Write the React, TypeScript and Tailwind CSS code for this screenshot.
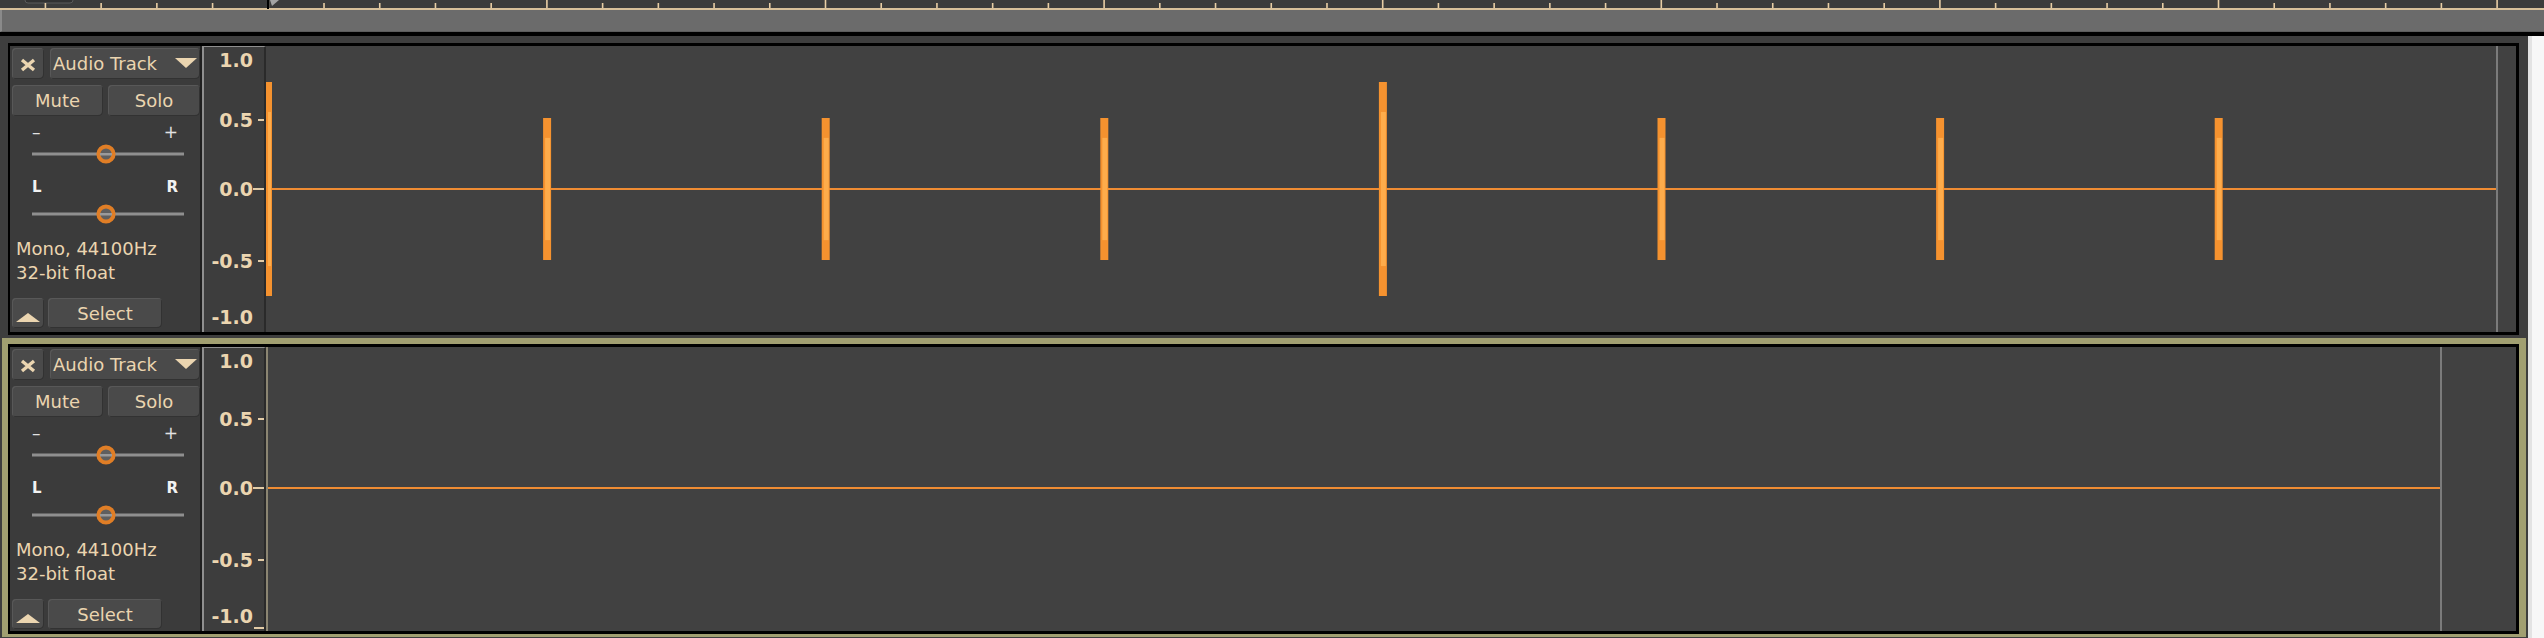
import React from "react";

const CREAM = "#ebd5b0";

// time ruler: one minor tick every 55.72px, a major one every fifth
const TICK_START = 268.5;
const TICK_STEP = 55.72;

type Spike = { x: number; w: number; a: number };

// clip starts at the left edge of the wave area; peaks sit on the major ticks
const trackOneSpikes: Spike[] = [
  { x: 0, w: 6, a: 107 },
  ...[1, 2, 3, 4, 5, 6, 7].map((k) => ({
    x: 281.1 + (k - 1) * 278.6 - 4,
    w: 8,
    a: k === 4 ? 107 : 71,
  })),
];

function TimeRuler() {
  const ticks = [];
  for (let n = -4; n <= 40; n++) {
    const x = TICK_START + n * TICK_STEP;
    const major = n % 5 === 0;
    ticks.push(
      <rect
        key={n}
        x={x - 1}
        y={major ? 0 : 3}
        width={1.6}
        height={major ? 8 : 5}
        fill="#e8cea5"
      />
    );
  }
  return (
    <svg width={2544} height={10} className="block bg-[#3c3c3c]">
      <rect x={25} y={-5} width={48} height={8} rx={3} fill="#323232" stroke="#5a5a5a" />
      {ticks}
      <rect x={0} y={8} width={2544} height={2} fill="#d8c09a" />
      <rect x={267} y={0} width={2} height={9} fill="#000" />
      <polygon points="270,0 279,0 272,6" fill="#a3a3a3" />
    </svg>
  );
}

function Btn({
  className,
  children,
}: {
  className: string;
  children?: React.ReactNode;
}) {
  return (
    <div
      className={`flex items-center rounded-[4px] bg-[#4a4a4a] shadow-[inset_1px_1px_0_#585858,inset_-1px_-1px_0_#323232] ${className}`}
    >
      {children}
    </div>
  );
}

function Slider({ className }: { className: string }) {
  return (
    <svg width={190} height={20} className={`block ${className}`}>
      <rect x={22} y={8.5} width={152} height={3} fill="#8f8f8f" />
      <circle cx={96} cy={10} r={7.6} fill="#5f5f5f" stroke="#e07e26" strokeWidth={4} />
      <rect x={90} y={9} width={12} height={2.5} fill="#9a9a9a" />
    </svg>
  );
}

function ControlPanel() {
  return (
    <div className="w-[192px] shrink-0 border-r-2 border-[#1f1f1f] bg-[#3b3b3b] flex flex-col text-[18px]">
      <div className="flex mt-[2px] h-[31px]">
        <Btn className="ml-[2px] w-[32px] justify-center pt-[2px]">
          <svg width={16} height={14}>
            <path d="M2 2 L14 12 M14 2 L2 12" stroke={CREAM} strokeWidth={3.4} />
          </svg>
        </Btn>
        <Btn className="ml-[6px] w-[150px] justify-between pl-[3px] pr-[3px]">
          <span className="leading-none">Audio Track</span>
          <svg width={22} height={11}>
            <polygon points="0,0 22,0 11,10" fill={CREAM} />
          </svg>
        </Btn>
      </div>
      <div className="flex mt-[6px] h-[31px]">
        <Btn className="ml-[2px] w-[91px] justify-center">Mute</Btn>
        <Btn className="ml-[5px] w-[92px] justify-center">Solo</Btn>
      </div>
      <div className="mt-[8px] h-[18px] flex justify-between items-center px-[22px] text-[17px] text-[#e2e2e2]">
        <span>–</span>
        <span>+</span>
      </div>
      <Slider className="mt-[2px]" />
      <div className="mt-[14px] h-[18px] flex justify-between items-center px-[22px] text-[15px] font-bold text-[#f2f2f2]">
        <span>L</span>
        <span>R</span>
      </div>
      <Slider className="mt-[8px]" />
      <div className="mt-[13px] pl-[6px] leading-[24px]">
        <div>Mono, 44100Hz</div>
        <div>32-bit float</div>
      </div>
      <div className="flex mt-[13px] h-[30px]">
        <Btn className="ml-[2px] w-[32px] justify-center pt-[10px]">
          <svg width={24} height={10}>
            <polygon points="12,0 24,9 0,9" fill={CREAM} />
          </svg>
        </Btn>
        <Btn className="ml-[4px] w-[114px] justify-center">Select</Btn>
      </div>
    </div>
  );
}

function AmpRuler({ h, zero, bottomTick }: { h: number; zero: number; bottomTick: boolean }) {
  const labels = [
    { t: "1.0", c: 14, tick: 0 },
    { t: "0.5", c: zero - 69, tick: 6 },
    { t: "0.0", c: zero, tick: 11 },
    { t: "-0.5", c: zero + 72, tick: 6 },
    { t: "-1.0", c: h - 15, tick: 0 },
  ];
  return (
    <div className="relative w-[64px] shrink-0 border-l-2 border-t border-r-2 border-l-[#8f8f8f] border-t-[#8f8f8f] border-r-[#2a2a2a] bg-[#3d3d3d] font-bold text-[19px]">
      {labels.map((l) => (
        <React.Fragment key={l.t}>
          <div
            className="absolute right-[11px] h-[20px] flex items-center leading-none"
            style={{ top: l.c - 11 }}
          >
            {l.t}
          </div>
          {l.tick > 0 && (
            <div
              className="absolute right-0 h-[2px] bg-[#e2cba6]"
              style={{ top: l.c - 2, width: l.tick }}
            />
          )}
        </React.Fragment>
      ))}
      {bottomTick && (
        <div className="absolute right-0 bottom-[2px] w-[10px] h-[2px] bg-[#e2cba6]" />
      )}
    </div>
  );
}

function Wave({
  h,
  zero,
  spikes,
  clipStart,
  clipEnd,
}: {
  h: number;
  zero: number;
  spikes: Spike[];
  clipStart: boolean;
  clipEnd: number;
}) {
  return (
    <svg width={2250} height={h} className="block bg-[#414141]">
      <rect x={0} y={zero - 1} width={clipEnd} height={2} fill="#ef8c33" />
      {spikes.map((s, i) => (
        <g key={i}>
          <rect x={s.x} y={zero - s.a} width={s.w} height={s.a * 2} fill="#f5922f" />
          <rect
            x={s.x + 2}
            y={zero - s.a * 0.72}
            width={s.w - 3}
            height={s.a * 1.44}
            fill="#feac4b"
          />
        </g>
      ))}
      {clipStart && <rect x={0} y={0} width={2} height={h} fill="#8b8572" />}
      <rect x={clipEnd} y={0} width={2} height={h} fill="#7b7b7b" />
    </svg>
  );
}

function Track({
  selected,
  h,
  zero,
  spikes,
  clipStart,
  clipEnd,
}: {
  selected: boolean;
  h: number;
  zero: number;
  spikes: Spike[];
  clipStart: boolean;
  clipEnd: number;
}) {
  return (
    <div
      className={`ml-[2px] w-[2524px] border-t-[6px] border-l-[6px] border-r-[7px] border-b-[3px] ${
        selected ? "border-[#a19f71]" : "border-[#3e3e3e]"
      }`}
    >
      <div
        className={`flex border-t-[3px] border-l-[2px] border-r-[3px] border-b-[3px] border-black ${
          h === 286 ? "h-[292px]" : "h-[290px]"
        }`}
      >
        <ControlPanel />
        <AmpRuler h={h} zero={zero} bottomTick={selected} />
        <Wave h={h} zero={zero} spikes={spikes} clipStart={clipStart} clipEnd={clipEnd} />
      </div>
    </div>
  );
}

export default function App() {
  return (
    <div
      className="w-[2544px] h-[638px] overflow-hidden bg-[#3e3e3e] font-['DejaVu_Sans',sans-serif]"
      style={{ color: CREAM }}
    >
      <TimeRuler />
      <div className="h-[22px] bg-[#6b6b6b] border-l-2 border-[#8a8a8a] border-b border-b-[#5c5c5c]" />
      <div className="h-[4px] bg-black" />
      <div className="flex h-[602px]">
        <div className="w-[2528px] shrink-0 pt-[1px]">
          <Track selected={false} h={286} zero={143} spikes={trackOneSpikes} clipStart={false} clipEnd={2230} />
          <Track selected h={284} zero={141} spikes={[]} clipStart clipEnd={2174} />
        </div>
        <div className="flex-1 bg-[#f7f7f7] border-l-[4px] border-[#e3e3e3]" />
      </div>
    </div>
  );
}
